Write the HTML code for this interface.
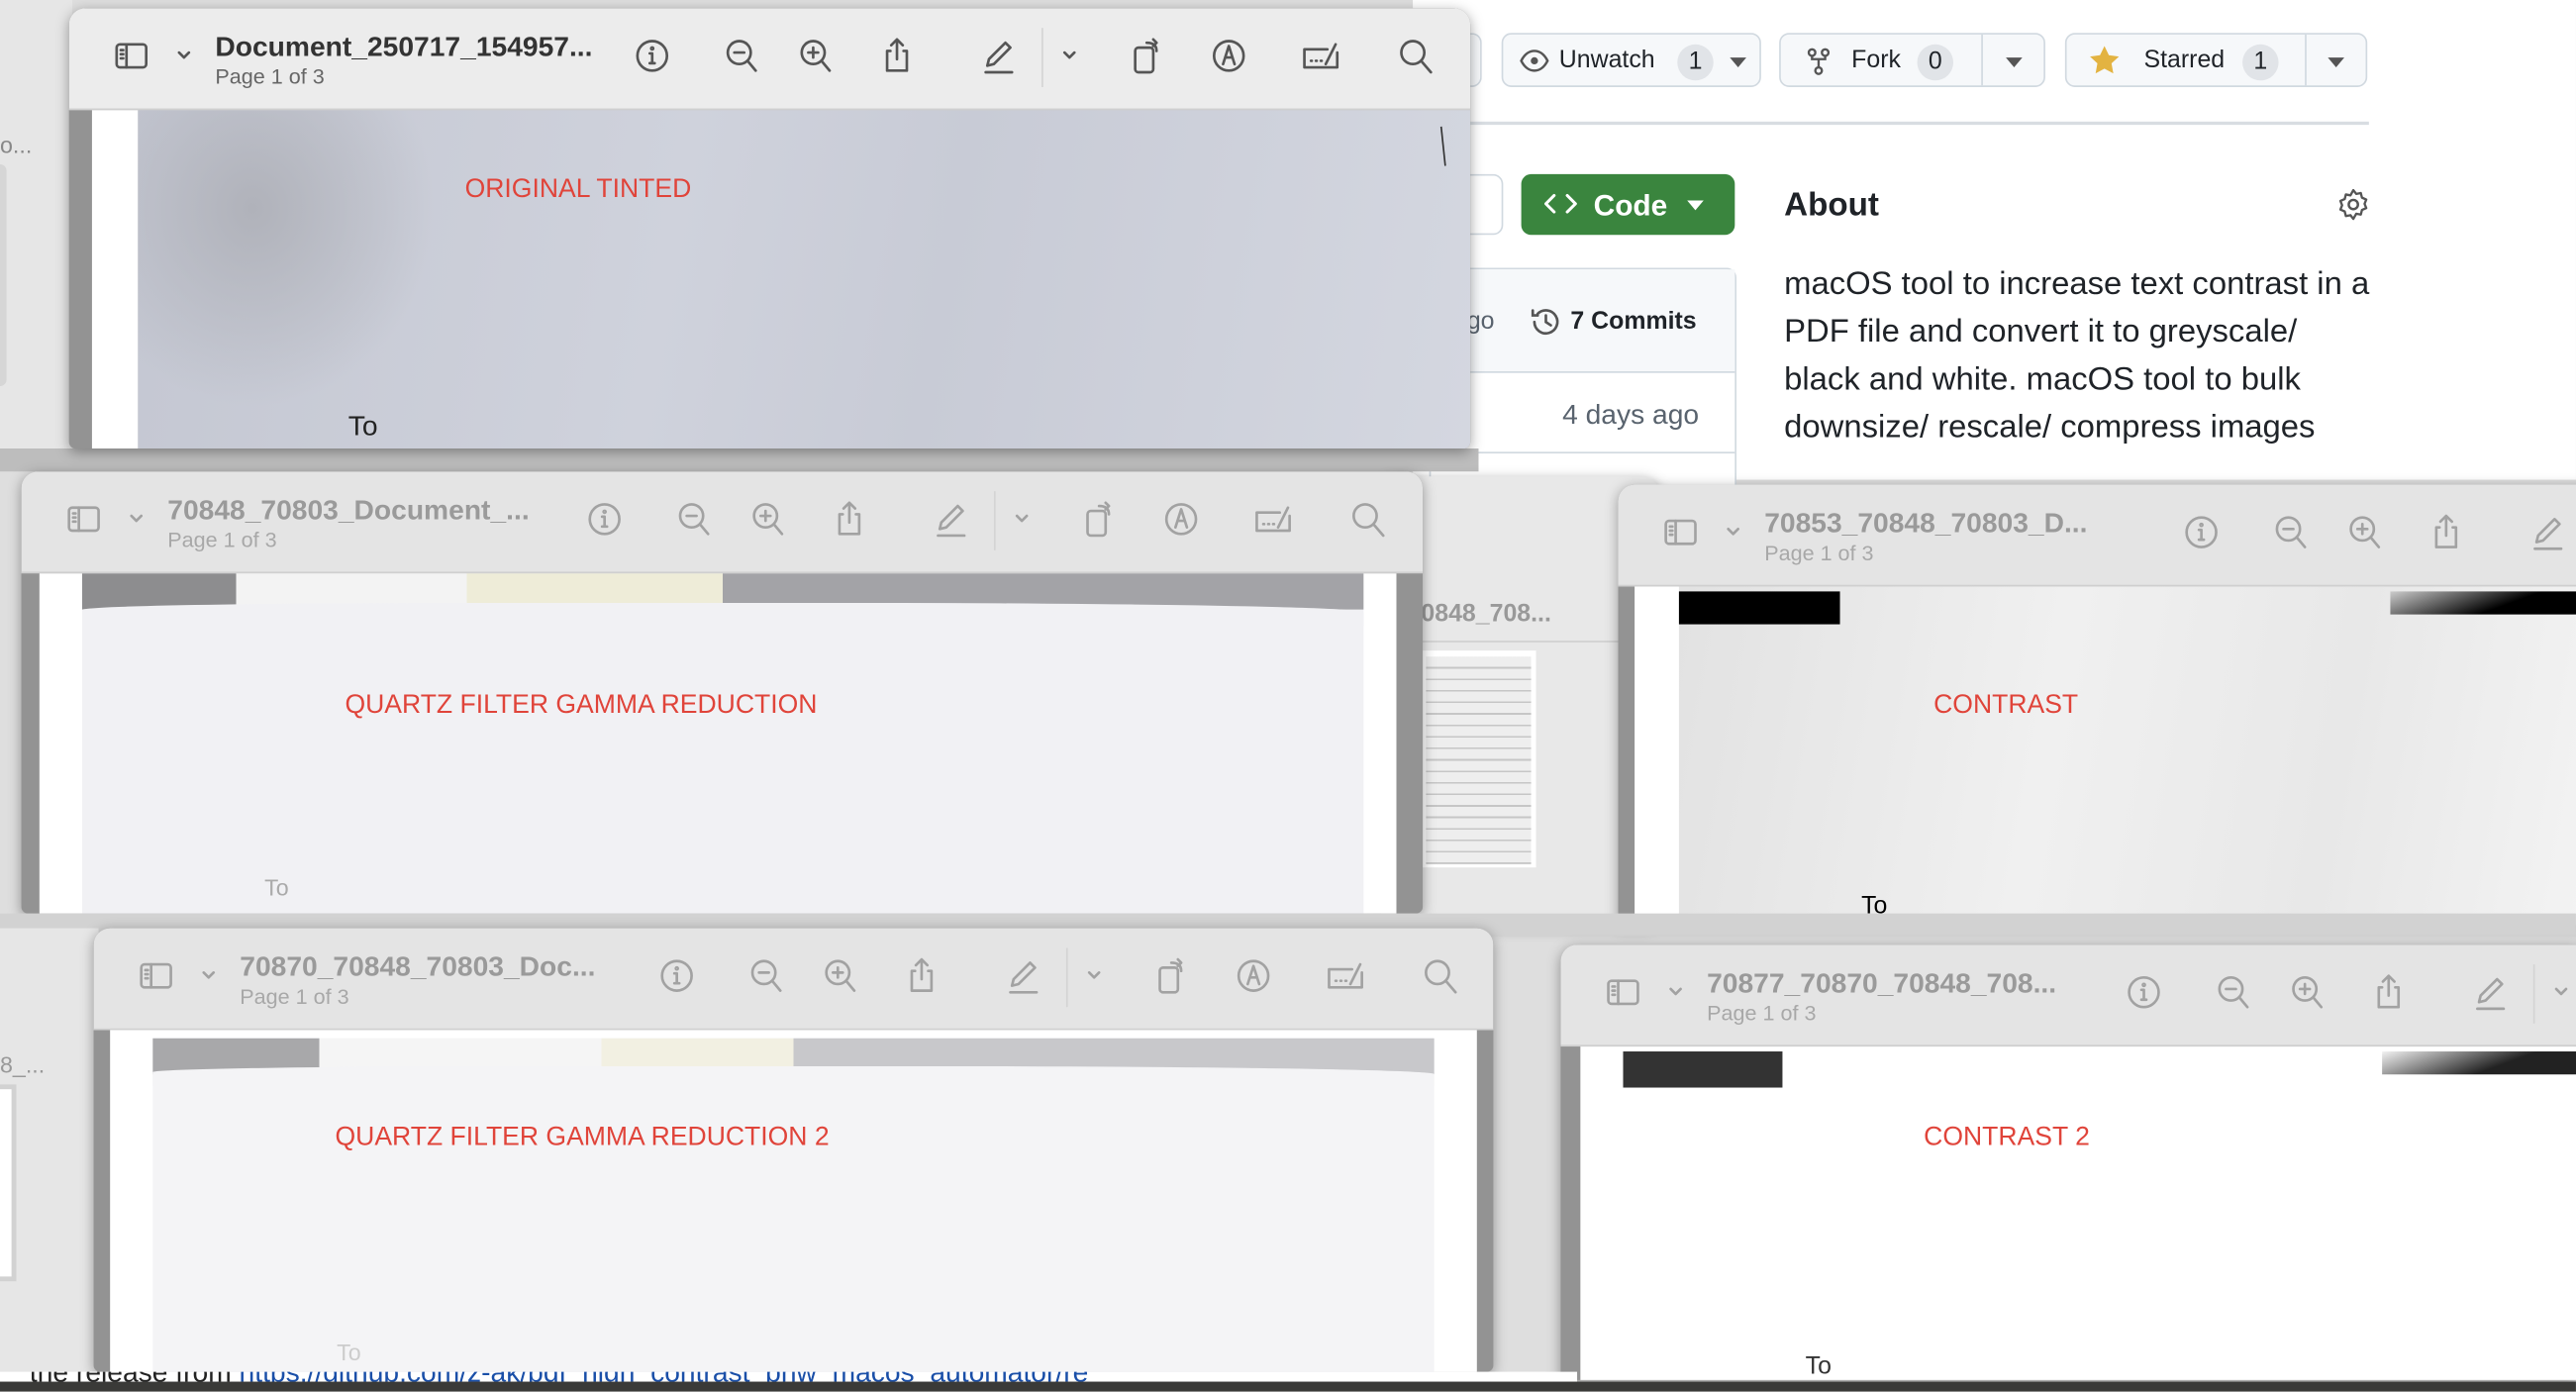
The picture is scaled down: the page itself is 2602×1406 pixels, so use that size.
<!DOCTYPE html>
<html><head><meta charset="utf-8"><style>
*{margin:0;padding:0;box-sizing:border-box}
html,body{width:2602px;height:1406px;overflow:hidden;background:#dcdcdc}
#s{position:absolute;left:0;top:0;width:1568px;height:847px;transform:scale(1.6594);transform-origin:0 0;font-family:"Liberation Sans",sans-serif;background:#dedede;overflow:hidden}
.a{position:absolute}
.win{position:absolute;border-radius:10px 10px 4px 4px;overflow:hidden;box-shadow:0 2px 8px rgba(0,0,0,.35);background:#909090}
.tb{position:absolute;left:0;top:0;right:0;height:62px;background:#ececec;border-bottom:1px solid #cfcfcf}
.tb.in{background:#e4e4e4}
.tb svg{position:absolute;top:17px;width:24px;height:24px;fill:none;stroke:#555;stroke-width:1.6;stroke-linecap:round;stroke-linejoin:round}
.tb.in svg{stroke:#a2a2a2}
.ti{position:absolute;left:89px;top:14px;font-size:17px;font-weight:bold;color:#333;white-space:nowrap}
.pg{position:absolute;left:89px;top:34px;font-size:13px;color:#666}
.tb.in .ti{color:#9a9a9a}.tb.in .pg{color:#a8a8a8}
.red{position:absolute;color:#e0443a;font-size:16px;white-space:nowrap}
.gbtn{position:absolute;top:20px;height:33px;border:1px solid #d1d9e0;border-radius:6px;background:#f6f8fa;font-size:15px;color:#1f2328;font-weight:bold}
.cnt{position:absolute;top:6px;width:22px;height:22px;border-radius:11px;background:#e1e4e8;text-align:center;line-height:22px;font-weight:normal}
.car{position:absolute;top:14px;width:0;height:0;border-left:5px solid transparent;border-right:5px solid transparent;border-top:6px solid #555}
</style></head><body><div id="s">

<div class="a" style="left:860px;top:0;width:708px;height:292px;background:#fff"></div>
<div class="gbtn" style="left:880px;width:22px;border-left:none;border-radius:0 6px 6px 0"></div>
<div class="gbtn" style="left:914px;width:158px">
 <svg class="a" style="left:10px;top:8px" width="18" height="16" viewBox="0 0 18 16"><path d="M1 8C3 4 6 2 9 2s6 2 8 6c-2 4-5 6-8 6S3 12 1 8z" fill="none" stroke="#555" stroke-width="1.5"/><circle cx="9" cy="8" r="2.2" fill="#555"/></svg>
 <span class="a" style="left:34px;top:7px;font-weight:normal">Unwatch</span><span class="cnt" style="left:106px">1</span><span class="car" style="left:138px"></span></div>
<div class="gbtn" style="left:1083px;width:162px">
 <svg class="a" style="left:16px;top:8px" width="14" height="17" viewBox="0 0 14 17"><circle cx="3" cy="3" r="2" fill="none" stroke="#555" stroke-width="1.4"/><circle cx="11" cy="3" r="2" fill="none" stroke="#555" stroke-width="1.4"/><circle cx="7" cy="14" r="2" fill="none" stroke="#555" stroke-width="1.4"/><path d="M3 5v2h8V5M7 7v5" fill="none" stroke="#555" stroke-width="1.4"/></svg>
 <span class="a" style="left:43px;top:7px;font-weight:normal">Fork</span><span class="cnt" style="left:83px">0</span>
 <div class="a" style="left:122px;top:0;width:1px;height:31px;background:#d1d9e0"></div><span class="car" style="left:137px"></span></div>
<div class="gbtn" style="left:1257px;width:184px">
 <svg class="a" style="left:13px;top:6px" width="20" height="20" viewBox="0 0 20 20"><path d="M10 1l2.7 5.6 6.1.8-4.5 4.2 1.1 6.1L10 14.8 4.6 17.7l1.1-6.1L1.2 7.4l6.1-.8z" fill="#e3b341"/></svg>
 <span class="a" style="left:47px;top:7px;font-weight:normal">Starred</span><span class="cnt" style="left:107px">1</span>
 <div class="a" style="left:145px;top:0;width:1px;height:31px;background:#d1d9e0"></div><span class="car" style="left:159px"></span></div>
<div class="a" style="left:895px;top:74px;width:547px;height:2px;background:#d8dde2"></div>
<div class="a" style="left:880px;top:106px;width:35px;height:37px;border:1px solid #d1d9e0;border-radius:6px;background:#fff"></div>
<div class="a" style="left:926px;top:106px;width:130px;height:37px;background:#3a853e;border-radius:6px;color:#fff;font-size:18px;font-weight:bold">
 <svg class="a" style="left:14px;top:11px" width="20" height="14" viewBox="0 0 20 14"><path d="M6 2L1 7l5 5M14 2l5 5-5 5" fill="none" stroke="#fff" stroke-width="1.8" stroke-linecap="round" stroke-linejoin="round"/></svg>
 <span class="a" style="left:44px;top:9px">Code</span>
 <span class="a" style="left:101px;top:16px;border-left:5px solid transparent;border-right:5px solid transparent;border-top:6px solid #fff"></span></div>
<div class="a" style="left:1086px;top:114px;font-size:20px;font-weight:bold;color:#1f2328">About</div>
<svg class="a" style="left:1422px;top:114px" width="21" height="21" viewBox="0 0 24 24"><circle cx="12" cy="12" r="3.2" fill="none" stroke="#555" stroke-width="1.7"/><path d="M12 2l2 2.6 3.2-.6.8 3.2 3 1.3-1.2 3 1.2 3-3 1.3-.8 3.2-3.2-.6L12 22l-2-2.6-3.2.6-.8-3.2-3-1.3 1.2-3-1.2-3 3-1.3.8-3.2 3.2.6z" fill="none" stroke="#555" stroke-width="1.6" stroke-linejoin="round"/></svg>
<div class="a" style="left:1086px;top:159px;width:358px;font-size:19.8px;line-height:29px;color:#1f2328">macOS tool to increase text contrast in a PDF file and convert it to greyscale/<br>black and white. macOS tool to bulk<br>downsize/ rescale/ compress images</div>
<div class="a" style="left:870px;top:163px;width:187px;height:140px;border:1px solid #d1d9e0;border-radius:6px 6px 0 0;background:#fff"></div>
<div class="a" style="left:871px;top:164px;width:185px;height:63px;background:#f6f8fa;border-bottom:1px solid #d1d9e0"></div>
<div class="a" style="left:893px;top:187px;font-size:15px;color:#59636e">go</div>
<svg class="a" style="left:931px;top:186px" width="20" height="20" viewBox="0 0 20 20"><path d="M3 10a7 7 0 1 0 2-5M2 3v3h3M10 6v4l3 2" fill="none" stroke="#555" stroke-width="1.6" stroke-linecap="round"/></svg>
<div class="a" style="left:956px;top:187px;font-size:15px;color:#1f2328;font-weight:bold">7 Commits</div>
<div class="a" style="left:951px;top:243px;font-size:17px;color:#59636e">4 days ago</div>
<div class="a" style="left:871px;top:275px;width:185px;height:1px;background:#d1d9e0"></div>

<div class="a" style="left:0;top:0;width:44px;height:273px;background:#e6e6e6"></div>
<div class="a" style="left:0;top:80px;font-size:14px;color:#888">o...</div>
<div class="a" style="left:-6px;top:100px;width:10px;height:135px;background:#d6d6d6;border-radius:4px"></div>
<div class="a" style="left:0;top:273px;width:900px;height:14px;background:#bdbdbd"></div>

<div class="win" style="left:42px;top:5px;width:853px;height:268px;background:#939393">
 <div class="a" style="left:14px;top:62px;width:28px;height:210px;background:#fff"></div>
 <div class="a" style="left:42px;top:62px;width:811px;height:210px;background:radial-gradient(ellipse 110px 120px at 70px 60px,#b0b2ba,rgba(0,0,0,0)),linear-gradient(100deg,#c4c7d2 0%,#cfd2dc 40%,#c8cbd6 60%,#d4d7e0 100%)"></div>
 <div class="red" style="left:241px;top:102px">ORIGINAL TINTED</div>
 <div class="a" style="left:170px;top:245px;font-size:17px;color:#222">To</div>
 <div class="a" style="left:836px;top:72px;width:1px;height:24px;background:#333;transform:rotate(-6deg)"></div>
 <div class="tb"></div>
</div>

<div class="win" style="left:840px;top:290px;width:170px;height:273px;background:#e8e8e8;border-radius:10px">
 <div class="a" style="left:25px;top:75px;font-size:15px;color:#999;font-weight:bold">0848_708...</div>
 <div class="a" style="left:0;top:100px;width:150px;height:1px;background:#d0d0d0"></div>
 <div class="a" style="left:25px;top:106px;width:70px;height:132px;background:#fff"></div>
 <div class="a" style="left:28px;top:110px;width:64px;height:126px;background:repeating-linear-gradient(180deg,#eee 0 6px,#c6c6c6 6px 7px)"></div>
</div>

<div class="win" style="left:13px;top:287px;width:853px;height:269px;background:#939393">
 <div class="a" style="left:11px;top:62px;width:826px;height:210px;background:#fff"></div>
 <div class="a" style="left:37px;top:62px;width:780px;height:210px;background:#f1f1f4"></div>
 <div class="a" style="left:37px;top:62px;width:780px;height:22px;background:linear-gradient(90deg,#8d8d8f 0 12%,#f3f3f3 12% 30%,#eeecd8 30% 50%,#a3a3a7 50% 100%)"></div>
 <div class="a" style="left:37px;top:80px;width:780px;height:14px;background:#f1f1f4;border-radius:30% 40% 0 0"></div>
 <div class="red" style="left:197px;top:134px">QUARTZ FILTER GAMMA REDUCTION</div>
 <div class="a" style="left:148px;top:245px;font-size:14px;color:#aaa">To</div>
 <div class="tb in"></div>
</div>

<div class="win" style="left:985px;top:295px;width:600px;height:268px;background:#939393;border-radius:10px 0 0 0">
 <div class="a" style="left:10px;top:62px;width:590px;height:210px;background:#fff"></div>
 <div class="a" style="left:37px;top:62px;width:563px;height:210px;background:linear-gradient(100deg,#e2e2e2,#f0f0f0 40%,#e8e8e8 70%,#f4f4f4)"></div>
 <div class="a" style="left:37px;top:65px;width:98px;height:20px;background:#000"></div>
 <div class="a" style="left:470px;top:65px;width:130px;height:14px;background:linear-gradient(160deg,#ccc,#000 55%)"></div>
 <div class="red" style="left:192px;top:126px">CONTRAST</div>
 <div class="a" style="left:148px;top:248px;font-size:15px;color:#000">To</div>
 <div class="tb in"></div>
</div>

<div class="a" style="left:0;top:556px;width:1568px;height:14px;background:#d2d2d2"></div>
<div class="a" style="left:0;top:565px;width:60px;height:270px;background:#e6e6e6"></div>
<div class="a" style="left:0;top:640px;font-size:14px;color:#999">8_...</div>
<div class="a" style="left:-6px;top:660px;width:16px;height:120px;background:#fff;border:3px solid #d2d2d2"></div>

<div class="win" style="left:950px;top:575px;width:620px;height:265px;background:#939393;border-radius:10px 0 0 0">
 <div class="a" style="left:12px;top:62px;width:608px;height:210px;background:#fff"></div>
 <div class="a" style="left:38px;top:65px;width:97px;height:22px;background:#333"></div>
 <div class="a" style="left:500px;top:65px;width:120px;height:14px;background:linear-gradient(160deg,#f2f2f2,#222 60%)"></div>
 <div class="red" style="left:221px;top:109px">CONTRAST 2</div>
 <div class="a" style="left:149px;top:248px;font-size:15px;color:#333">To</div>
 <div class="tb in"></div>
</div>

<div class="win" style="left:57px;top:565px;width:852px;height:270px;background:#939393">
 <div class="a" style="left:10px;top:62px;width:832px;height:210px;background:#fff"></div>
 <div class="a" style="left:36px;top:67px;width:780px;height:210px;background:#f4f4f6"></div>
 <div class="a" style="left:36px;top:67px;width:780px;height:22px;background:linear-gradient(90deg,#a8a8aa 0 13%,#f5f5f5 13% 35%,#f2f0e2 35% 50%,#c8c8cb 50% 100%)"></div>
 <div class="a" style="left:36px;top:84px;width:780px;height:12px;background:#f4f4f6;border-radius:30% 40% 0 0"></div>
 <div class="red" style="left:147px;top:119px">QUARTZ FILTER GAMMA REDUCTION 2</div>
 <div class="a" style="left:148px;top:250px;font-size:14px;color:#ccc">To</div>
 <div class="tb in"></div>
</div>

<div class="a" style="left:0;top:835px;width:960px;height:6px;background:#fff"></div>
<div class="a" style="left:18px;top:826px;font-size:17px;color:#222;white-space:nowrap;clip-path:inset(9px 0 0 0)">the release from <span style="color:#1a4fa8">https://github.com/z-ak/pdf_high_contrast_bnw_macos_automator/re</span></div>
<div class="a" style="left:0;top:841px;width:1568px;height:6px;background:#3a3a38"></div>

</div>
<script>
var defs=[
[26,'<rect x="3" y="5" width="18" height="14" rx="2"/><path d="M9 5v14M5.5 8.5h1.5M5.5 11h1.5M5.5 13.5h1.5"/>'],
[58,'<path d="M9 10l3 3 3-3"/>'],
[343,'<circle cx="12" cy="12" r="9"/><path d="M12 10.5v6M10.5 16.5h3M10.5 10.5h1.5"/><circle cx="12" cy="7.5" r=".6"/>'],
[397,'<circle cx="11" cy="10" r="7"/><path d="M16 15l5 6M8 10h6"/>'],
[442,'<circle cx="11" cy="10" r="7"/><path d="M16 15l5 6M8 10h6M11 7v6"/>'],
[492,'<path d="M8 9H6v12h12V9h-2M12 2v12M8.5 5.5L12 2l3.5 3.5"/>'],
[554,'<path d="M5 18l1-4L16 4l3 3L9 17zM4 22h16"/>'],
[597,'<path d="M9 10l3 3 3-3"/>'],
[644,'<rect x="5" y="7" width="11" height="15" rx="2"/><path d="M12 4c3 0 6 1 6 5M16 2l2 2-2 2"/>'],
[694,'<circle cx="12" cy="12" r="9"/><path d="M8.5 17L12 6l3.5 11M10 13h4"/>'],
[750,'<path d="M2 8h14M2 8v11h20V10M6 15h.5M9 15h.5M12 15h.5M15 17l6-12"/>'],
[808,'<circle cx="10" cy="10" r="7"/><path d="M15 15l6 7"/>']];
document.querySelectorAll('.tb').forEach(function(tb){
 var h='';
 defs.forEach(function(d){h+='<svg viewBox="0 0 24 24" style="left:'+d[0]+'px">'+d[1]+'</svg>';});
 h+='<div class="a" style="left:592px;top:12px;width:1px;height:36px;background:#d4d4d4"></div>';
 tb.innerHTML=h;
});
var tt=["Document_250717_154957...","70848_70803_Document_...","70853_70848_70803_D...","70877_70870_70848_708...","70870_70848_70803_Doc..."];
document.querySelectorAll('.tb').forEach(function(tb,i){
 var d=document.createElement('div');d.className='ti';d.textContent=tt[i];tb.appendChild(d);
 var p=document.createElement('div');p.className='pg';p.textContent='Page 1 of 3';tb.appendChild(p);
});
</script>
</div></body></html>
